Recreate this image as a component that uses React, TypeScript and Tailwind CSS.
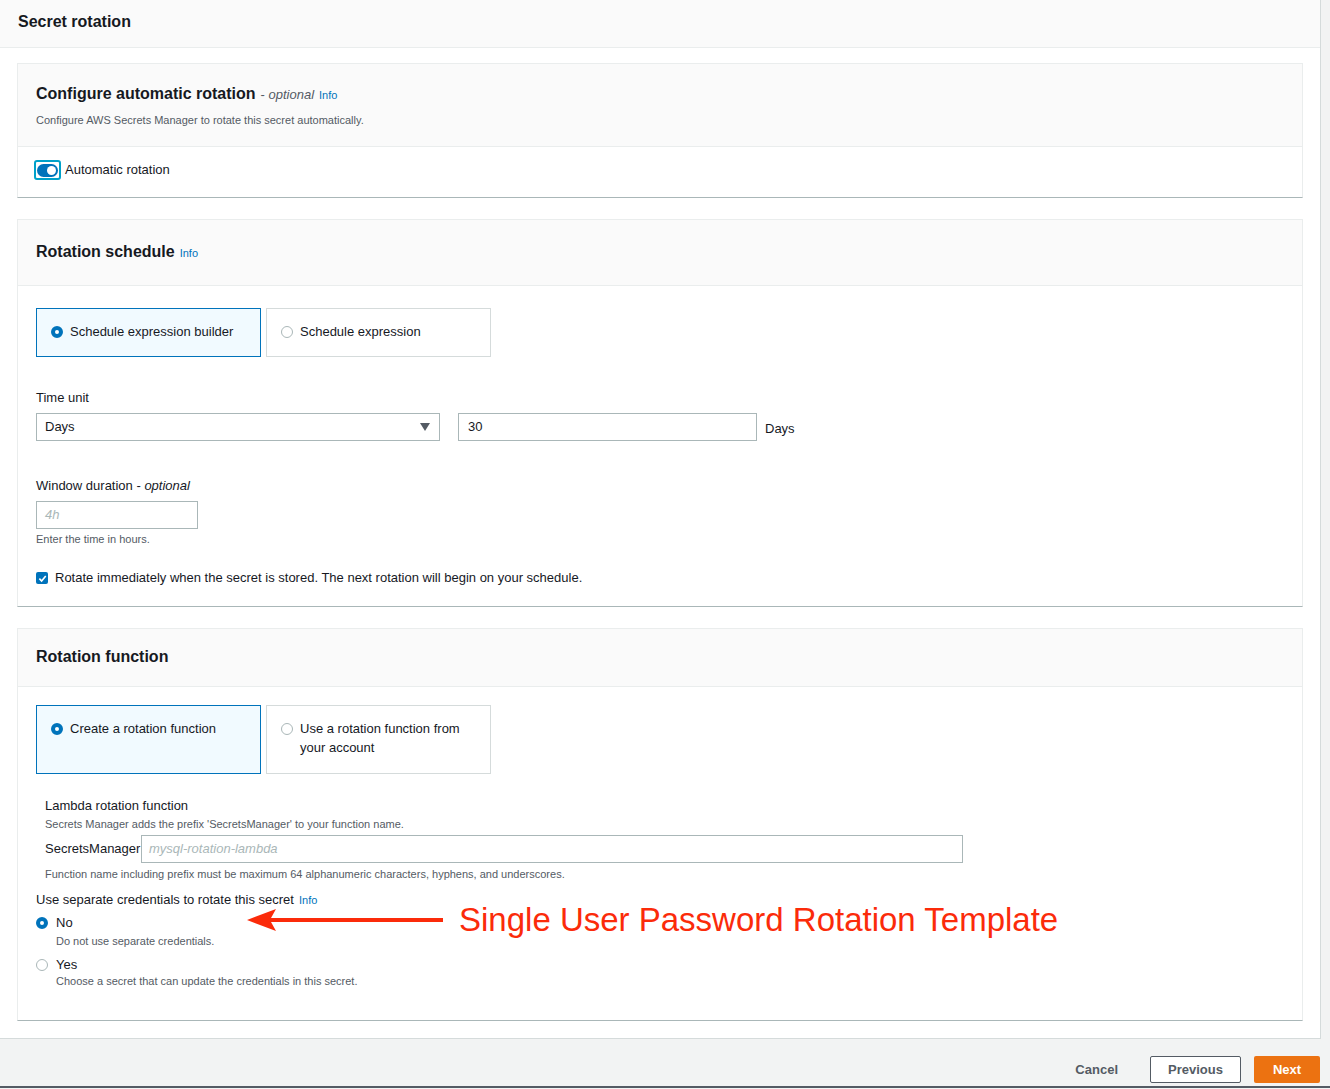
import React from 'react';

const FONT = { fontFamily: '"Liberation Sans", Arial, sans-serif' };

// Radio dot, AWS style
const Radio = ({ checked }: { checked?: boolean }) =>
  checked ? (
    <span className="inline-block w-[12px] h-[12px] rounded-full border-[4px] border-[#0073bb] bg-white shrink-0" />
  ) : (
    <span className="inline-block w-[12px] h-[12px] rounded-full border border-[#aab7b8] bg-white shrink-0" />
  );

const Info = () => <span className="text-[11px] text-[#0073bb] ml-[5px]">Info</span>;

const Tile = ({ checked, children, tall }: { checked?: boolean; children: React.ReactNode; tall?: boolean }) => (
  <div
    className={`w-[225px] ${tall ? 'h-[69px]' : 'h-[49px]'} border ${
      checked ? 'border-[#0073bb] bg-[#f1faff]' : 'border-[#d5dbdb] bg-white'
    } flex items-start gap-[7px] pl-[14px] pr-[12px] py-[13px]`}
  >
    <div className="h-[19px] flex items-center">
      <Radio checked={checked} />
    </div>
    <div className="text-[13px] leading-[19px] text-[#16191f]">{children}</div>
  </div>
);

const Card = ({ header, children, className = '' }: { header: React.ReactNode; children: React.ReactNode; className?: string }) => (
  <div className={`bg-white border border-[#eaeded] border-b-[#aab7b8] ${className}`}>
    {header}
    {children}
  </div>
);

export default function App() {
  return (
    <div className="w-[1330px] h-[1089px] bg-[#f2f3f3] text-[#16191f] overflow-hidden relative" style={FONT}>
      <div className="w-[1321px] bg-white border-r border-b border-[#d5dbdb]">
        {/* Page header */}
        <div className="h-[48px] bg-[#fafafa] border-b border-[#eaeded] pl-[18px] pt-[12px]">
          <h1 className="text-[16px] leading-[20px] font-bold">Secret rotation</h1>
        </div>

        <div className="pl-[17px] pr-[17px] pt-[15px] pb-[17px]">
          {/* Configure automatic rotation */}
          <Card
            header={
              <div className="bg-[#fafafa] border-b border-[#eaeded] px-[18px] pt-[20px] pb-[18px]">
                <div className="flex items-baseline leading-[20px]">
                  <span className="text-[16px] font-bold">Configure automatic rotation</span>
                  <span className="text-[13px] text-[#545b64] ml-[5px]">
                    - <i>optional</i>
                  </span>
                  <Info />
                </div>
                <p className="mt-[7px] text-[11px] leading-[16px] text-[#545b64]">
                  Configure AWS Secrets Manager to rotate this secret automatically.
                </p>
              </div>
            }
          >
            <div className="h-[50px] px-[16px] pt-[13px]">
              <div className="flex items-center gap-[4px] h-[20px]">
                <span className="w-[27px] h-[20px] border-2 border-[#00a1c9] rounded-[3px] flex items-center justify-center">
                  <span className="w-[21px] h-[13px] rounded-full bg-[#0073bb] flex items-center justify-end pr-[2px]">
                    <span className="w-[9px] h-[9px] rounded-full bg-white" />
                  </span>
                </span>
                <span className="text-[13px]">Automatic rotation</span>
              </div>
            </div>
          </Card>

          {/* Rotation schedule */}
          <Card
            className="mt-[21px]"
            header={
              <div className="h-[66px] bg-[#fafafa] border-b border-[#eaeded] px-[18px] pt-[22px]">
                <div className="flex items-baseline leading-[20px]">
                  <span className="text-[16px] font-bold">Rotation schedule</span>
                  <Info />
                </div>
              </div>
            }
          >
            <div className="px-[18px] pt-[22px] pb-[20px]">
              <div className="flex gap-[5px]">
                <Tile checked>Schedule expression builder</Tile>
                <Tile>Schedule expression</Tile>
              </div>

              <div className="mt-[33px] text-[13px] leading-[16px]">Time unit</div>
              <div className="mt-[7px] flex items-start">
                <div className="w-[404px] h-[28px] border border-[#aab7b8] flex items-center justify-between pl-[8px] pr-[9px] text-[13px]">
                  <span>Days</span>
                  <svg width="10" height="8" viewBox="0 0 10 8">
                    <path d="M0 0 L10 0 L5 8 Z" fill="#545b64" />
                  </svg>
                </div>
                <div className="ml-[18px] w-[299px] h-[28px] border border-[#aab7b8] flex items-center pl-[9px] text-[13px]">30</div>
                <span className="ml-[8px] mt-[8px] text-[13px] leading-[16px]">Days</span>
              </div>

              <div className="mt-[37px] text-[13px] leading-[16px]">
                Window duration - <i>optional</i>
              </div>
              <div className="mt-[7px] w-[162px] h-[28px] border border-[#aab7b8] flex items-center pl-[8px] text-[13px] italic text-[#aab7b8]">
                4h
              </div>
              <p className="mt-[3px] text-[11px] leading-[14px] text-[#545b64]">Enter the time in hours.</p>

              <div className="mt-[24px] flex items-center gap-[7px] h-[16px]">
                <span className="w-[12px] h-[12px] rounded-[2px] bg-[#0073bb] flex items-center justify-center">
                  <svg width="9" height="9" viewBox="0 0 10 10">
                    <path d="M1.5 5.2 L4 7.7 L8.6 2.2" stroke="white" strokeWidth="1.8" fill="none" />
                  </svg>
                </span>
                <span className="text-[13px]">
                  Rotate immediately when the secret is stored. The next rotation will begin on your schedule.
                </span>
              </div>
            </div>
          </Card>

          {/* Rotation function */}
          <Card
            className="mt-[21px]"
            header={
              <div className="h-[58px] bg-[#fafafa] border-b border-[#eaeded] px-[18px] pt-[16px]">
                <span className="text-[16px] leading-[20px] font-bold">Rotation function</span>
              </div>
            }
          >
            <div className="px-[18px] pt-[18px] pb-[32px]">
              <div className="flex gap-[5px]">
                <Tile checked tall>
                  Create a rotation function
                </Tile>
                <Tile tall>Use a rotation function from your account</Tile>
              </div>

              <div className="pl-[9px]">
                <div className="mt-[24px] text-[13px] leading-[16px]">Lambda rotation function</div>
                <p className="mt-[3px] text-[11px] leading-[14px] text-[#545b64]">
                  Secrets Manager adds the prefix 'SecretsManager' to your function name.
                </p>
                <div className="mt-[4px] flex items-center">
                  <span className="text-[13px] w-[96px]">SecretsManager</span>
                  <div className="w-[822px] h-[28px] border border-[#aab7b8] flex items-center pl-[7px] text-[13px] italic text-[#aab7b8]">
                    mysql-rotation-lambda
                  </div>
                </div>
                <p className="mt-[4px] text-[11px] leading-[14px] text-[#545b64]">
                  Function name including prefix must be maximum 64 alphanumeric characters, hyphens, and underscores.
                </p>
              </div>

              <div className="mt-[11px] flex items-baseline text-[13px] leading-[16px]">
                Use separate credentials to rotate this secret
                <Info />
              </div>

              <div className="mt-[7px] flex items-center gap-[8px] h-[16px]">
                <Radio checked />
                <span className="text-[13px]">No</span>
              </div>
              <p className="ml-[20px] mt-[3px] text-[11px] leading-[14px] text-[#545b64]">Do not use separate credentials.</p>

              <div className="mt-[9px] flex items-center gap-[8px] h-[16px]">
                <Radio />
                <span className="text-[13px]">Yes</span>
              </div>
              <p className="ml-[20px] mt-[1px] text-[11px] leading-[14px] text-[#545b64]">
                Choose a secret that can update the credentials in this secret.
              </p>
            </div>
          </Card>
        </div>
      </div>

      {/* Footer actions */}
      <div className="h-[49px] border-b-2 border-[#545b64] flex items-start justify-end pr-[10px] pt-[17px]">
        <span className="text-[13px] leading-[27px] font-bold text-[#545b64] mr-[32px]">Cancel</span>
        <span className="w-[91px] h-[27px] border border-[#545b64] rounded-[2px] bg-white flex items-center justify-center text-[13px] font-bold text-[#545b64]">
          Previous
        </span>
        <span className="ml-[13px] w-[66px] h-[27px] rounded-[2px] bg-[#ec7211] flex items-center justify-center text-[13px] font-bold text-white">
          Next
        </span>
      </div>

      {/* Annotation overlay */}
      <div className="absolute left-[246px] top-[902px] flex items-center h-[36px]">
        <svg width="200" height="24" viewBox="0 0 200 24">
          <path d="M1 12 L30 1 L25 10 L197 10 L197 14 L25 14 L30 23 Z" fill="#fb2b0a" />
        </svg>
        <span className="ml-[13px] text-[33px] leading-[36px] text-[#fb2b0a] whitespace-nowrap" style={{ fontFamily: '"Liberation Sans", Arial, sans-serif' }}>
          Single User Password Rotation Template
        </span>
      </div>
    </div>
  );
}
